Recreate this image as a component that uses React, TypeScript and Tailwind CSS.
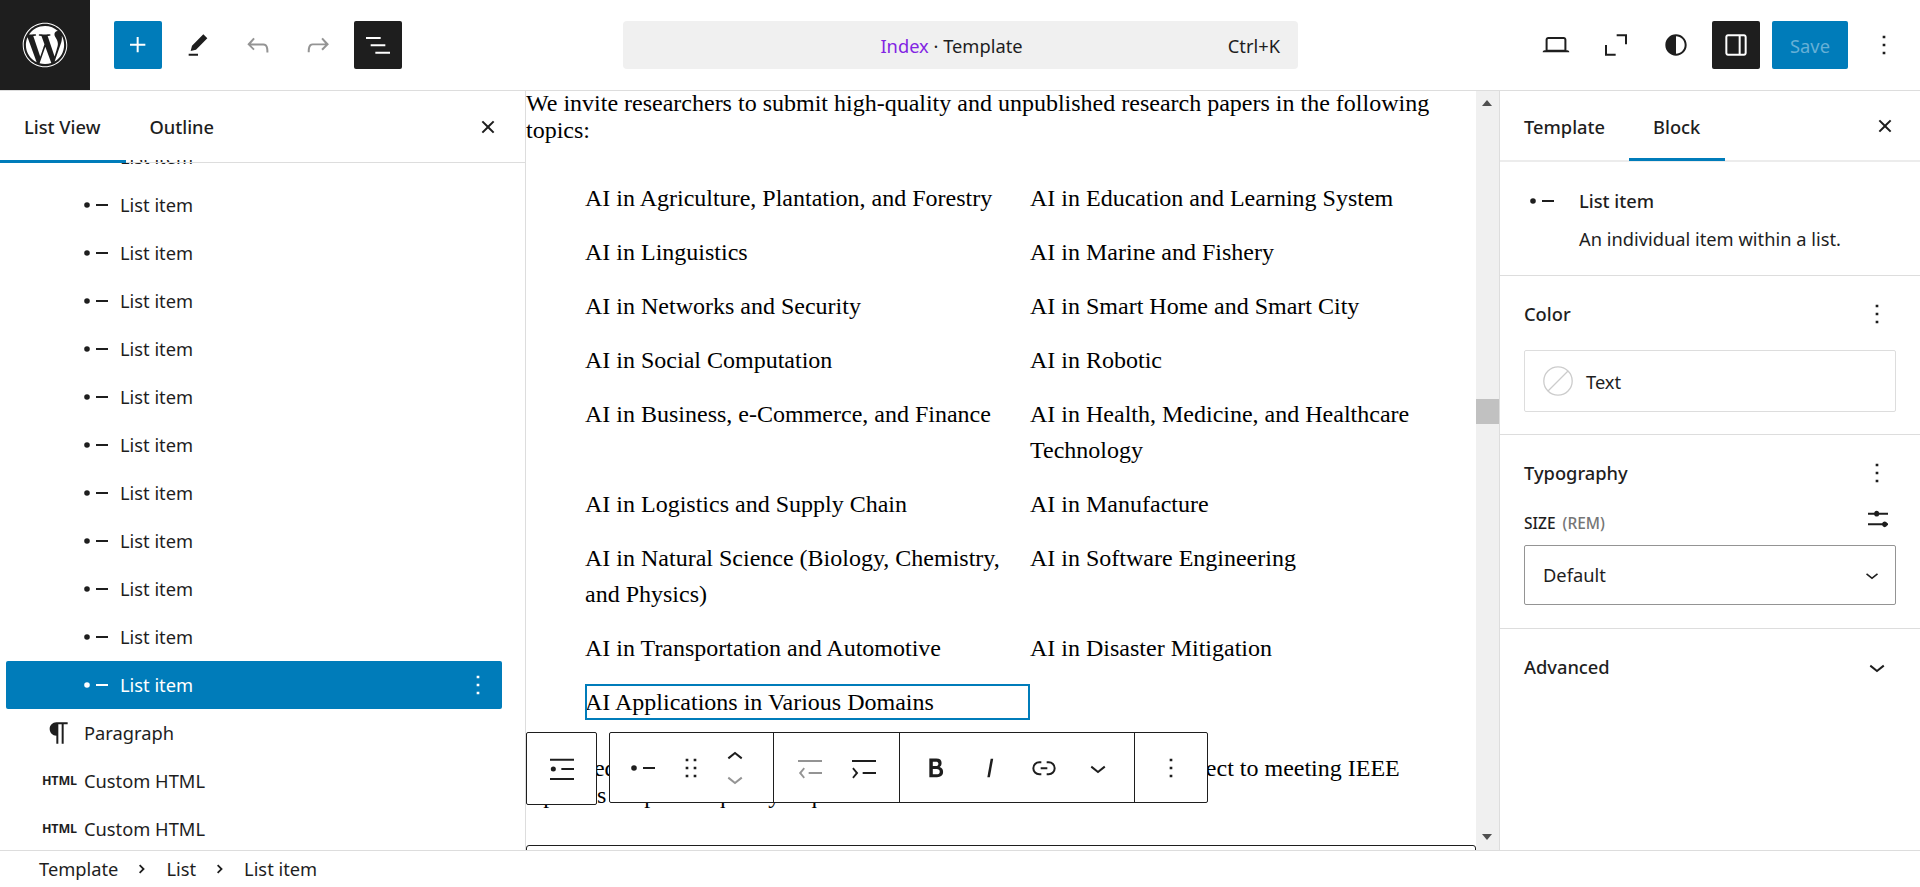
import type { ReactNode } from 'react'
import { FaWordpress } from 'react-icons/fa'

const ui = "[font-family:'Noto_Sans',sans-serif]"

function Ico({ d, className = 'fill-[#1e1e1e]', size = 32 }: { d: string; className?: string; size?: number }) {
  return (
    <svg viewBox="0 0 24 24" width={size} height={size} className={`shrink-0 ${className}`}>
      <path d={d} fillRule="evenodd" clipRule="evenodd" />
    </svg>
  )
}

const p = {
  plus: 'M11 12.5V17.5H12.5V12.5H17.5V11H12.5V6H11V11H6V12.5H11Z',
  pencil: 'm19 7-3-3-8.5 8.5-1 4 4-1L19 7Zm-7 11.5H5V20h7v-1.5Z',
  undo: 'M18.3 11.7c-.6-.6-1.4-.9-2.3-.9H6.7l2.9-3.3-1.1-1-4.5 5L8.5 16l1-1-2.7-2.7H16c.5 0 .9.2 1.3.5 1 1 1 3.4 1 4.5v.3h1.5v-.2c0-1.5 0-4.3-1.5-5.7z',
  redo: 'M15.6 6.5l-1.1 1 2.9 3.3H8c-.9 0-1.7.3-2.3.9-1.4 1.5-1.4 4.2-1.4 5.6v.2h1.5v-.3c0-1.1 0-3.5 1-4.5.3-.3.7-.5 1.3-.5h9.2L14.5 15l1.1 1.1 4.6-4.6-4.6-5z',
  listView: 'M3 6h11v1.5H3V6Zm3.5 5.5h11V13h-11v-1.5ZM21 17H10v1.5h11V17Z',
  close: 'M12 13.06l3.712 3.713 1.061-1.06L13.061 12l3.712-3.712-1.06-1.06L12 10.938 8.288 7.227l-1.061 1.06L10.939 12l-3.712 3.712 1.06 1.061L12 13.061z',
  listItem: 'M12 11.25h9v1.5h-9zM5.25 9.9a2.1 2.1 0 1 1 0 4.2 2.1 2.1 0 0 1 0-4.2Z',
  paragraph: 'm9.99609 14v-.2251l.00391.0001v6.225h1.5v-14.5h2.5v14.5h1.5v-14.5h3v-1.5h-8.50391c-2.76142 0-5 2.23858-5 5 0 2.7614 2.23858 5 5 5z',
  desktop: 'M20.5 16h-.7V8c0-1.1-.9-2-2-2H6.2c-1.1 0-2 .9-2 2v8h-.7c-.8 0-1.5.7-1.5 1.5h20c0-.8-.7-1.5-1.5-1.5zM5.7 8c0-.3.2-.5.5-.5h11.6c.3 0 .5.2.5.5v7.6H5.7V8z',
  fullscreen: 'M12.5 4h7.75v7.5h-1.5v-6H12.5V4ZM3.75 12h1.5v6.5h6.5V20h-8v-8Z',
  contrast: 'M12 4c-4.4 0-8 3.6-8 8s3.6 8 8 8 8-3.6 8-8-3.6-8-8-8zm0 14.5V5.5c3.6 0 6.5 2.9 6.5 6.5s-2.9 6.5-6.5 6.5z',
  sidebar: 'M18 4H6c-1.1 0-2 .9-2 2v12c0 1.1.9 2 2 2h12c1.1 0 2-.9 2-2V6c0-1.1-.9-2-2-2zm-4 14.5H6c-.3 0-.5-.2-.5-.5V6c0-.3.2-.5.5-.5h8v13zm4.5-.5c0 .3-.2.5-.5.5h-2.5v-13H18c.3 0 .5.2.5.5v12z',
  more: 'M13 19h-2v-2h2v2zm0-6h-2v-2h2v2zm0-6h-2V5h2v2z',
  chevronDown: 'M17.5 11.6L12 16l-5.5-4.4.9-1.2L12 14l4.6-3.6 1 1.2z',
  chevronUp: 'M6.5 12.4L12 8l5.5 4.4-.9 1.2L12 10l-4.5 3.6-1-1.2z',
  chevronRight: 'M9.9 6.6 15.4 12l-5.5 5.4-1.5-1.5 3.9-3.9-3.9-3.9z',
  drag: 'M8 7h2V5H8v2zm0 6h2v-2H8v2zm0 6h2v-2H8v2zm6-14v2h2V5h-2zm0 8h2v-2h-2v2zm0 6h2v-2h-2v2z',
  bold: 'M14.7 11.3c1-.6 1.5-1.6 1.5-3 0-2.3-1.3-3.4-4-3.4H7v14h5.8c1.4 0 2.5-.3 3.3-1 .8-.7 1.2-1.7 1.2-2.9.1-1.9-.8-3.1-2.6-3.7zm-5.1-4h2.3c.6 0 1.1.1 1.4.4.3.3.5.7.5 1.2s-.2 1-.5 1.2c-.3.3-.8.4-1.4.4H9.6V7.3zm4.6 9c-.4.3-1 .4-1.7.4H9.6v-3.9h2.9c.7 0 1.3.2 1.7.5.4.3.6.8.6 1.5s-.2 1.2-.6 1.5z',
  italic: 'M12.5 5L10 19h1.9l2.5-14z',
  link: 'M10 17.389H8.444A5.194 5.194 0 1 1 8.444 7H10v1.5H8.444a3.694 3.694 0 0 0 0 7.389H10v1.5ZM14 7h1.556a5.194 5.194 0 0 1 0 10.39H14v-1.5h1.556a3.694 3.694 0 0 0 0-7.39H14V7Zm-4.5 6h5v-1.5h-5V13Z',
  list: 'M3 4.25h18v1.5H3zM3 18.75h18v1.5H3zM11.5 11.25H21v1.5h-9.5zM5.5 10.1a1.9 1.9 0 1 1 0 3.8 1.9 1.9 0 0 1 0-3.8Z',
  outdent: 'M3 6h18v1.5H3zM11 15h10v1.5H11zM7.2 11.6l1 1-2.6 3.1 2.6 3.2-1 1-3.5-4.2z',
  indent: 'M3 6h18v1.5H3zM11 15h10v1.5H11zM4.2 11.6l-1 1 2.6 3.1-2.6 3.2 1 1 3.5-4.2z',
  sliders: 'M3 7.25h4.6a2 2 0 0 1 3.8 0H18v1.5h-6.6a2 2 0 0 1-3.8 0H3zM3 15.25h10.6a2 2 0 0 1 3.8 0h.6v1.5h-.6a2 2 0 0 1-3.8 0H3z',
}

function TopBtn({ d, dark, blue, muted }: { d: string; dark?: boolean; blue?: boolean; muted?: boolean }) {
  const bg = dark ? 'bg-[#1e1e1e]' : blue ? 'bg-[#007cba]' : ''
  const fill = dark || blue ? 'fill-white' : muted ? 'fill-[#949494]' : 'fill-[#1e1e1e]'
  return (
    <button className={`w-12 h-12 rounded-[2px] flex items-center justify-center ${bg}`}>
      <Ico d={d} className={fill} />
    </button>
  )
}

function ListRow({ selected }: { selected?: boolean }) {
  return (
    <div className={`ml-[6px] w-[496px] h-12 flex items-center pl-[74px] pr-2 rounded-[2px] ${selected ? 'bg-[#007cba] text-white' : 'text-[#1e1e1e]'}`}>
      <Ico d={p.listItem} className={selected ? 'fill-white' : 'fill-[#1e1e1e]'} />
      <span className="ml-2">List item</span>
      {selected && (
        <span className="ml-auto">
          <Ico d={p.more} className="fill-white" />
        </span>
      )}
    </div>
  )
}

function HtmlRow() {
  return (
    <div className="ml-[6px] w-[496px] h-12 flex items-center pl-[36px] text-[#1e1e1e]">
      <span className="w-[36px] text-[12.5px] font-bold tracking-[-0.2px] leading-none">HTML</span>
      <span className="ml-[6px]">Custom HTML</span>
    </div>
  )
}

function PanelHead({ title, children }: { title: string; children: ReactNode }) {
  return (
    <div className="flex items-center justify-between h-8">
      <span className="font-medium">{title}</span>
      <span className="mr-[3px]">{children}</span>
    </div>
  )
}

const topics = [
  'AI in Agriculture, Plantation, and Forestry',
  'AI in Education and Learning System',
  'AI in Linguistics',
  'AI in Marine and Fishery',
  'AI in Networks and Security',
  'AI in Smart Home and Smart City',
  'AI in Social Computation',
  'AI in Robotic',
  'AI in Business, e-Commerce, and Finance',
  'AI in Health, Medicine, and Healthcare Technology',
  'AI in Logistics and Supply Chain',
  'AI in Manufacture',
  'AI in Natural Science (Biology, Chemistry, and Physics)',
  'AI in Software Engineering',
  'AI in Transportation and Automotive',
  'AI in Disaster Mitigation',
]

function BlockToolbar() {
  return (
    <>
      <div className="absolute left-0 top-[641px] w-[71px] h-[73px] bg-white border border-[#1e1e1e] rounded-[2px] flex items-center justify-center">
        <Ico d={p.list} />
      </div>
      <div className="absolute left-[83px] top-[641px] h-[71px] bg-white border border-[#1e1e1e] rounded-[2px] flex items-center">
        <div className="w-[164px] h-full flex items-center pl-[17px] border-r border-[#1e1e1e]">
          <Ico d={p.listItem} />
          <span className="ml-[16px]">
            <Ico d={p.drag} />
          </span>
          <div className="ml-[12px] flex flex-col">
            <Ico d={p.chevronUp} />
            <span className="-mt-[10px]">
              <Ico d={p.chevronDown} className="fill-[#949494]" />
            </span>
          </div>
        </div>
        <div className="w-[126px] h-full flex items-center justify-center gap-[22px] border-r border-[#1e1e1e]">
          <Ico d={p.outdent} className="fill-[#949494]" />
          <Ico d={p.indent} />
        </div>
        <div className="w-[235px] h-full flex items-center pl-[20px] gap-[22px] border-r border-[#1e1e1e]">
          <Ico d={p.bold} />
          <Ico d={p.italic} />
          <Ico d={p.link} />
          <Ico d={p.chevronDown} />
        </div>
        <div className="w-[72px] h-full flex items-center justify-center">
          <Ico d={p.more} />
        </div>
      </div>
    </>
  )
}

export default function App() {
  return (
    <div className={`w-[1920px] h-[887px] overflow-hidden flex flex-col bg-white text-[#1e1e1e] text-[18.3px] ${ui}`}>
      <header className="h-[91px] shrink-0 flex items-start border-b border-[#dddddd]">
        <div className="w-[90px] h-[90px] bg-[#1e1e1e] flex items-center justify-center">
          <FaWordpress className="text-white" size={46} />
        </div>
        <div className="ml-6 mt-[21px] flex gap-3">
          <TopBtn d={p.plus} blue />
          <TopBtn d={p.pencil} />
          <TopBtn d={p.undo} muted />
          <TopBtn d={p.redo} muted />
          <TopBtn d={p.listView} dark />
        </div>
        <div className="ml-[221px] mt-[21px] w-[675px] h-12 pt-[2px] rounded-[4px] bg-[#f0f0f0] relative flex items-center justify-center">
          <span className="-ml-[18px]">
            <span className="text-[#8224e3]">Index</span> · Template
          </span>
          <span className="absolute right-[18px]">Ctrl+K</span>
        </div>
        <div className="ml-auto mr-3 mt-[21px] flex gap-3">
          <TopBtn d={p.desktop} />
          <TopBtn d={p.fullscreen} />
          <TopBtn d={p.contrast} />
          <TopBtn d={p.sidebar} dark />
          <button className="w-[76px] h-12 rounded-[2px] bg-[#007cba] text-[#66b0d6] pt-[2px]">Save</button>
          <TopBtn d={p.more} />
        </div>
      </header>

      <div className="flex-1 flex min-h-0">
        <aside className="w-[526px] shrink-0 border-r border-[#dddddd] flex flex-col relative">
          <div className="h-[69px] shrink-0 flex items-center pt-[2px] bg-white z-10">
            <span className="ml-[24px] font-medium">List View</span>
            <span className="ml-[49px] font-medium">Outline</span>
            <span className="ml-auto mr-[21px]">
              <Ico d={p.close} />
            </span>
          </div>
          <span className="absolute left-0 right-0 top-[71px] h-px bg-[#dddddd] z-10" />
          <span className="absolute left-0 top-[69px] w-[126px] h-[3px] bg-[#007cba] z-10" />
          <div className="flex-1 min-h-0 overflow-hidden">
            <div className="-mt-[27px]">
              {Array.from({ length: 11 }).map((_, i) => (
                <ListRow key={i} />
              ))}
              <ListRow selected />
              <div className="ml-[6px] w-[496px] h-12 flex items-center pl-[37px]">
                <Ico d={p.paragraph} />
                <span className="ml-[9px]">Paragraph</span>
              </div>
              <HtmlRow />
              <HtmlRow />
            </div>
          </div>
        </aside>

        <main className="flex-1 min-w-0 relative overflow-hidden text-[24px] text-black [font-family:'Liberation_Serif',serif]">
          <p className="leading-[27px] -mt-[1px]">
            We invite researchers to submit high-quality and unpublished research papers in the following topics:
          </p>
          <ul className="mt-[36px] pl-[59px] grid grid-cols-[445px_445px] gap-y-[18px] leading-[36px]">
            {topics.map((t) => (
              <li key={t}>{t}</li>
            ))}
            <li className="outline-2 -outline-offset-2 outline-[#007cba]">AI Applications in Various Domains</li>
          </ul>
          <p className="mt-[35px] leading-[27px]">
            Accepted papers will be submitted for inclusion into IEEE Xplore subject to meeting IEEE Xplore's scope and quality requirements.
          </p>
          <div className="mt-[36px] h-24 border border-[#1e1e1e] rounded-t-[3px]" />
          <BlockToolbar />
        </main>

        <div className="w-[23px] shrink-0 bg-[#f0f0f0] relative">
          <span className="absolute left-[6px] top-[9px] w-0 h-0 border-x-[5.5px] border-x-transparent border-b-[6px] border-b-[#505050]" />
          <span className="absolute left-0 top-[308px] w-[23px] h-[25px] bg-[#c1c1c1]" />
          <span className="absolute left-[6px] bottom-[10px] w-0 h-0 border-x-[5.5px] border-x-transparent border-t-[6px] border-t-[#505050]" />
        </div>

        <aside className="w-[421px] shrink-0 border-l border-[#dddddd]">
          <div className="h-[71px] relative flex items-center pt-[2px] border-b-2 border-[#ececec]">
            <span className="ml-[24px] font-medium">Template</span>
            <span className="ml-[48px] font-medium">Block</span>
            <span className="ml-auto mr-[19px] -mt-[2px]">
              <Ico d={p.close} />
            </span>
            <span className="absolute left-[129px] bottom-[-1px] w-[96px] h-[3px] bg-[#007cba]" />
          </div>
          <div className="h-[114px] border-b border-[#dddddd] pl-[26px] pt-[23px] flex">
            <Ico d={p.listItem} />
            <div className="ml-[21px]">
              <div className="font-medium leading-[32px]">List item</div>
              <div className="mt-[9px] leading-[26px]">An individual item within a list.</div>
            </div>
          </div>
          <section className="h-[159px] border-b border-[#dddddd] px-6 pt-[22px]">
            <PanelHead title="Color">
              <Ico d={p.more} />
            </PanelHead>
            <div className="mt-[20px] h-[62px] border border-[#dddddd] rounded-[2px] flex items-center pl-[18px]">
              <svg width="30" height="30" viewBox="0 0 30 30" className="shrink-0">
                <circle cx="15" cy="15" r="14.2" fill="white" stroke="#cccccc" strokeWidth="1.3" />
                <path d="M5 25 25 5" stroke="#cccccc" strokeWidth="1.3" />
              </svg>
              <span className="ml-[13px] pt-[2px]">Text</span>
            </div>
          </section>
          <section className="h-[194px] border-b border-[#dddddd] px-6 pt-[22px]">
            <PanelHead title="Typography">
              <Ico d={p.more} />
            </PanelHead>
            <div className="mt-[19px] h-8 flex items-center justify-between">
              <span className="text-[15.5px] font-medium">
                SIZE <span className="ml-[3px] text-[#757575]">(REM)</span>
              </span>
              <span className="-mt-[10px]">
                <Ico d={p.sliders} />
              </span>
            </div>
            <div className="mt-[5px] h-[60px] border border-[#949494] rounded-[2px] flex items-center justify-between pl-[18px] pr-[10px]">
              <span>Default</span>
              <Ico d={p.chevronDown} size={26} />
            </div>
          </section>
          <div className="px-6 pt-[22px]">
            <PanelHead title="Advanced">
              <Ico d={p.chevronDown} />
            </PanelHead>
          </div>
        </aside>
      </div>

      <footer className="h-[37px] shrink-0 border-t border-[#dddddd] flex items-center pl-[39px] relative z-10 bg-white">
        <span>Template</span>
        <Ico d={p.chevronRight} size={20} className="mx-[14px] fill-[#1e1e1e]" />
        <span>List</span>
        <Ico d={p.chevronRight} size={20} className="mx-[14px] fill-[#1e1e1e]" />
        <span>List item</span>
      </footer>
    </div>
  )
}
